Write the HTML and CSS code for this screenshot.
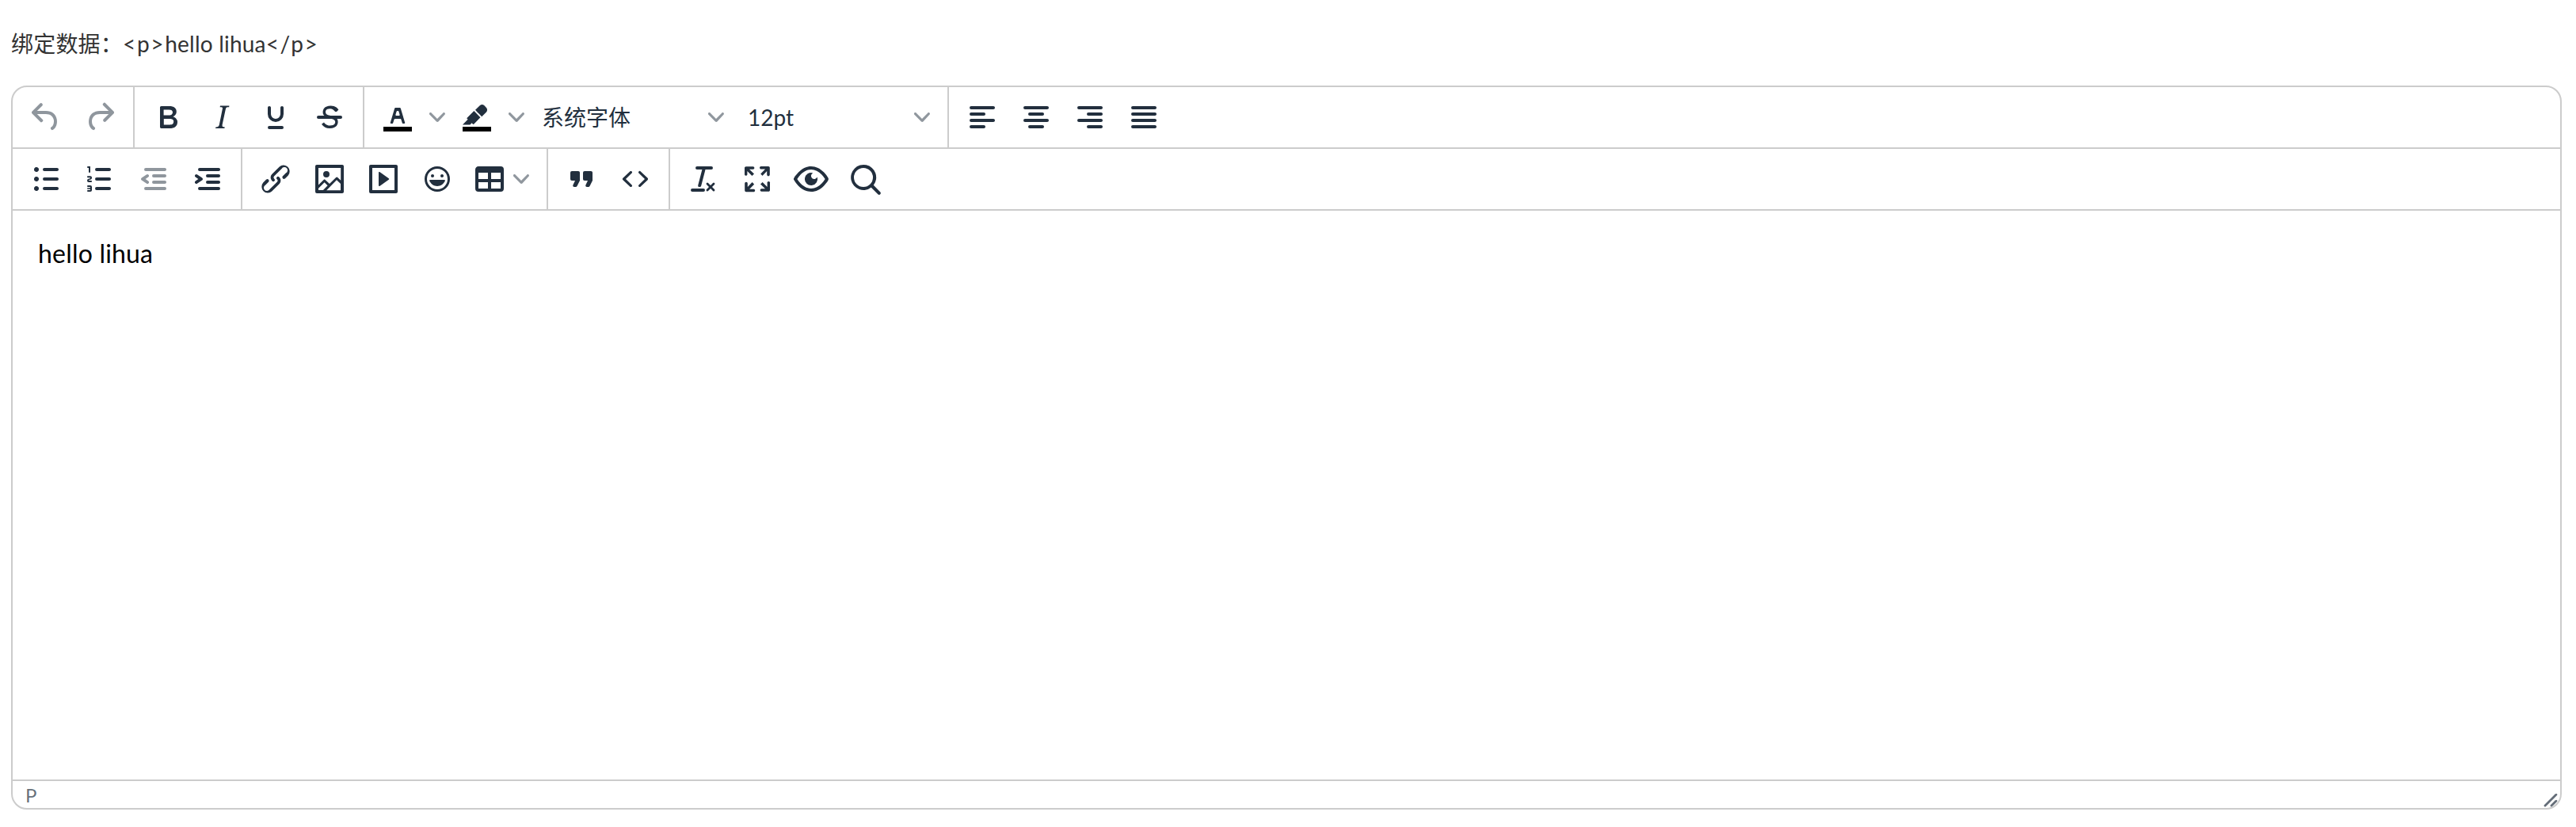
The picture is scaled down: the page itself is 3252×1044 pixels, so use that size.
FILE: index.html
```html
<!DOCTYPE html>
<html lang="zh-CN">
<head>
    <meta charset="UTF-8">
    <title>TinyMCE</title>
    <link rel="stylesheet" href="styles.css">
</head>
<body>
    <p class="bound-data">绑定数据：<span class="tag">&lt;p&gt;</span>hello lihua<span class="tag">&lt;/p&gt;</span></p>

    <div class="editor">
        <div class="toolbar">
            <div class="group">
                <button class="btn disabled"><svg class="icon" viewBox="0 0 24 24"><path d="M6.4 8H12c3.7 0 6.2 2 6.8 5.1.6 2.7-.4 5.6-2.3 6.8a1 1 0 01-1-1.8c1.1-.6 1.8-2.7 1.4-4.6-.5-2.1-2.1-3.5-4.9-3.5H6.4l3.3 3.3a1 1 0 11-1.4 1.4l-5-5a1 1 0 010-1.4l5-5a1 1 0 011.4 1.4L6.4 8z"/></svg></button>
                <button class="btn disabled"><svg class="icon" viewBox="0 0 24 24"><path d="M17.6 10H12c-2.8 0-4.4 1.4-4.9 3.5-.4 2 .3 4 1.4 4.6a1 1 0 11-1 1.8c-2-1.2-2.9-4.1-2.3-6.8.6-3 3-5.1 6.8-5.1h5.6l-3.3-3.3a1 1 0 111.4-1.4l5 5a1 1 0 010 1.4l-5 5a1 1 0 01-1.4-1.4l3.3-3.3z"/></svg></button>
            </div>
            <div class="group">
                <button class="btn"><svg class="icon" viewBox="0 0 24 24"><path d="M7.8 19c-.3 0-.5 0-.6-.2l-.2-.5V5.7c0-.2 0-.4.2-.5l.6-.2h5c1.5 0 2.7.3 3.5 1 .7.6 1.1 1.4 1.1 2.5a3 3 0 01-.6 1.9c-.4.6-1 1-1.6 1.2.4.1.9.3 1.3.6s.8.7 1 1.2c.4.4.5 1 .5 1.6 0 1.3-.4 2.3-1.3 3-.8.7-2.1 1-3.8 1H7.8zm5-8.3c.6 0 1.2-.1 1.6-.5.4-.3.6-.7.6-1.3 0-1.1-.8-1.7-2.3-1.7H9.3v3.5h3.4zm.5 6c.7 0 1.3-.1 1.7-.4.4-.4.6-.9.6-1.5s-.2-1-.7-1.4c-.4-.3-1-.4-2-.4H9.4v3.8h4z" fill-rule="evenodd"/></svg></button>
                <button class="btn"><svg class="icon" viewBox="0 0 24 24"><path d="M16.7 4.7l-.1.9h-.3c-.6 0-1 0-1.4.3-.3.3-.4.6-.5 1.1l-2.1 9.8v.6c0 .5.4.8 1.4.8h.2l-.2.8H8l.2-.8h.2c1.1 0 1.8-.5 2-1.5l2-9.8.1-.5c0-.6-.4-.8-1.4-.8h-.3l.2-.9h5.8z" fill-rule="evenodd"/></svg></button>
                <button class="btn"><svg class="icon" viewBox="0 0 24 24"><path d="M8 5c.6 0 1 .4 1 1v4a3 3 0 006 0V6c0-.6.4-1 1-1s1 .4 1 1v4a5 5 0 01-10 0V6c0-.6.4-1 1-1zM8 17.5h8a1 1 0 010 2H8a1 1 0 010-2z"/></svg></button>
                <button class="btn"><svg class="icon" viewBox="0 0 24 24"><path d="M15.6 8.5c-.5-.7-1-1.1-1.3-1.3-.6-.4-1.3-.6-2-.6-2.7 0-2.8 1.7-2.8 2.1 0 1.6 1.8 2 3.2 2.3 4.4.9 4.6 2.8 4.6 3.9 0 1.4-.7 4.1-5 4.1A6.2 6.2 0 017 16.4l1.5-1.1c.4.6 1.6 2 3.7 2 1.6 0 2.5-.4 3-1 .3-.4.4-.9.4-1.3 0-1.6-1.8-2-3.2-2.3-4.4-.9-4.6-2.8-4.6-3.9 0-1.4.7-4.1 5-4.1 1.4 0 2.6.4 3.5 1 .6.5 1.1 1 1.4 1.6l-1.2 1.2z" fill-rule="nonzero"/><path d="M5 11h14a1 1 0 010 2H5a1 1 0 010-2z"/></svg></button>
            </div>
            <div class="group">
                <button class="btn"><svg class="icon" viewBox="0 0 24 24"><path class="swatch" d="M3 18h18v3H3z"/><path d="M8.7 16h-.8a.5.5 0 01-.5-.6l2.7-9c.1-.3.3-.4.5-.4h2.8c.2 0 .4.1.5.4l2.7 9a.5.5 0 01-.5.6h-.8a.5.5 0 01-.4-.4l-.7-2.2c0-.3-.3-.4-.5-.4h-3.4c-.2 0-.4.1-.5.4l-.7 2.2c0 .3-.2.4-.4.4zm2.6-7.6l-.6 2a.5.5 0 00.5.6h1.6a.5.5 0 00.5-.6l-.6-2c0-.3-.3-.4-.5-.4h-.4c-.2 0-.4.1-.5.4z" fill-rule="evenodd"/></svg></button>
                <button class="split-chevron"><svg class="chevron" viewBox="0 0 10 10"><path d="M8.7 2.2c.3-.3.8-.3 1 0 .4.4.4.9 0 1.2L5.7 7.8c-.3.3-.9.3-1.2 0L.2 3.4a.8.8 0 010-1.2c.3-.3.8-.3 1.1 0L5 6l3.7-3.8z"/></svg></button>
                <button class="btn"><svg class="icon" viewBox="0 0 24 24"><path class="swatch" d="M3 18h18v3H3z"/><path fill-rule="nonzero" d="M7.7 16.7H3l3.3-3.3-.7-.8L10.2 8l4 4.1-4 4.2c-.2.2-.6.2-.8 0l-.6-.7-1.1 1.1zm5-7.5L11 7.4l3-2.9a2 2 0 012.6 0L18 6c.7.7.7 2 0 2.7l-2.9 2.9-1.8-1.8-.5-.6"/></svg></button>
                <button class="split-chevron"><svg class="chevron" viewBox="0 0 10 10"><path d="M8.7 2.2c.3-.3.8-.3 1 0 .4.4.4.9 0 1.2L5.7 7.8c-.3.3-.9.3-1.2 0L.2 3.4a.8.8 0 010-1.2c.3-.3.8-.3 1.1 0L5 6l3.7-3.8z"/></svg></button>
                <button class="select"><span class="select-label">系统字体</span><svg class="chevron" viewBox="0 0 10 10"><path d="M8.7 2.2c.3-.3.8-.3 1 0 .4.4.4.9 0 1.2L5.7 7.8c-.3.3-.9.3-1.2 0L.2 3.4a.8.8 0 010-1.2c.3-.3.8-.3 1.1 0L5 6l3.7-3.8z"/></svg></button>
                <button class="select"><span class="select-label">12pt</span><svg class="chevron" viewBox="0 0 10 10"><path d="M8.7 2.2c.3-.3.8-.3 1 0 .4.4.4.9 0 1.2L5.7 7.8c-.3.3-.9.3-1.2 0L.2 3.4a.8.8 0 010-1.2c.3-.3.8-.3 1.1 0L5 6l3.7-3.8z"/></svg></button>
            </div>
            <div class="group last">
                <button class="btn"><svg class="icon" viewBox="0 0 24 24"><path d="M5 5h14c.6 0 1 .4 1 1s-.4 1-1 1H5a1 1 0 110-2zm0 4h8c.6 0 1 .4 1 1s-.4 1-1 1H5a1 1 0 110-2zm0 8h8c.6 0 1 .4 1 1s-.4 1-1 1H5a1 1 0 010-2zm0-4h14c.6 0 1 .4 1 1s-.4 1-1 1H5a1 1 0 010-2z"/></svg></button>
                <button class="btn"><svg class="icon" viewBox="0 0 24 24"><path d="M5 5h14c.6 0 1 .4 1 1s-.4 1-1 1H5a1 1 0 110-2zm3 4h8c.6 0 1 .4 1 1s-.4 1-1 1H8a1 1 0 110-2zm0 8h8c.6 0 1 .4 1 1s-.4 1-1 1H8a1 1 0 010-2zm-3-4h14c.6 0 1 .4 1 1s-.4 1-1 1H5a1 1 0 010-2z"/></svg></button>
                <button class="btn"><svg class="icon" viewBox="0 0 24 24"><path d="M5 5h14c.6 0 1 .4 1 1s-.4 1-1 1H5a1 1 0 110-2zm6 4h8c.6 0 1 .4 1 1s-.4 1-1 1h-8a1 1 0 010-2zm0 8h8c.6 0 1 .4 1 1s-.4 1-1 1h-8a1 1 0 010-2zm-6-4h14c.6 0 1 .4 1 1s-.4 1-1 1H5a1 1 0 010-2z"/></svg></button>
                <button class="btn"><svg class="icon" viewBox="0 0 24 24"><path d="M5 5h14c.6 0 1 .4 1 1s-.4 1-1 1H5a1 1 0 110-2zm0 4h14c.6 0 1 .4 1 1s-.4 1-1 1H5a1 1 0 110-2zm0 4h14c.6 0 1 .4 1 1s-.4 1-1 1H5a1 1 0 010-2zm0 4h14c.6 0 1 .4 1 1s-.4 1-1 1H5a1 1 0 010-2z"/></svg></button>
            </div>
        </div>

        <div class="toolbar">
            <div class="group">
                <button class="btn"><svg class="icon" viewBox="0 0 24 24"><path d="M11 5h8c.6 0 1 .4 1 1s-.4 1-1 1h-8a1 1 0 010-2zm0 6h8c.6 0 1 .4 1 1s-.4 1-1 1h-8a1 1 0 010-2zm0 6h8c.6 0 1 .4 1 1s-.4 1-1 1h-8a1 1 0 010-2zM4.5 6c0-.4.1-.8.4-1 .3-.4.7-.5 1.1-.5s.8.1 1 .4c.4.3.5.7.5 1.1s-.1.8-.4 1c-.3.4-.7.5-1.1.5s-.8-.1-1-.4c-.4-.3-.5-.7-.5-1.1zm0 6c0-.4.1-.8.4-1 .3-.4.7-.5 1.1-.5s.8.1 1 .4c.4.3.5.7.5 1.1s-.1.8-.4 1c-.3.4-.7.5-1.1.5s-.8-.1-1-.4c-.4-.3-.5-.7-.5-1.1zm0 6c0-.4.1-.8.4-1 .3-.4.7-.5 1.1-.5s.8.1 1 .4c.4.3.5.7.5 1.1s-.1.8-.4 1c-.3.4-.7.5-1.1.5s-.8-.1-1-.4c-.4-.3-.5-.7-.5-1.1z"/></svg></button>
                <button class="btn"><svg class="icon" viewBox="0 0 24 24"><path d="M10 17h8c.6 0 1 .4 1 1s-.4 1-1 1h-8a1 1 0 010-2zm0-6h8c.6 0 1 .4 1 1s-.4 1-1 1h-8a1 1 0 010-2zm0-6h8c.6 0 1 .4 1 1s-.4 1-1 1h-8a1 1 0 010-2z"/><path d="M6 4v3.5c0 .3-.2.5-.5.5a.5.5 0 01-.5-.5V5h-.5a.5.5 0 010-1H6zm-1 8.8l.2.2h1.3c.3 0 .5.2.5.5s-.2.5-.5.5H4.9a1 1 0 01-.9-1V13c0-.4.3-.8.6-1l1.2-.4.2-.3a.2.2 0 00-.2-.2H4.5a.5.5 0 01-.5-.5c0-.3.2-.5.5-.5h1.6c.5 0 .9.4.9 1v.1c0 .4-.3.8-.6 1l-1.2.4-.2.3zM7 17v2c0 .6-.4 1-1 1H4.5a.5.5 0 010-1h1.2c.2 0 .3-.1.3-.3 0-.2-.1-.3-.3-.3H4.4a.4.4 0 110-.8h1.3c.2 0 .3-.1.3-.3 0-.2-.1-.3-.3-.3H4.5a.5.5 0 110-1H6c.6 0 1 .4 1 1z"/></svg></button>
                <button class="btn disabled"><svg class="icon" viewBox="0 0 24 24"><path d="M7 5h12c.6 0 1 .4 1 1s-.4 1-1 1H7a1 1 0 110-2zm5 4h7c.6 0 1 .4 1 1s-.4 1-1 1h-7a1 1 0 010-2zm0 4h7c.6 0 1 .4 1 1s-.4 1-1 1h-7a1 1 0 010-2zm-5 4h12a1 1 0 010 2H7a1 1 0 010-2zm1.6-3.8a1 1 0 01-1.2 1.6l-3-2a1 1 0 010-1.6l3-2a1 1 0 011.2 1.6L6.8 12l1.8 1.2z"/></svg></button>
                <button class="btn"><svg class="icon" viewBox="0 0 24 24"><path d="M7 5h12c.6 0 1 .4 1 1s-.4 1-1 1H7a1 1 0 110-2zm5 4h7c.6 0 1 .4 1 1s-.4 1-1 1h-7a1 1 0 010-2zm0 4h7c.6 0 1 .4 1 1s-.4 1-1 1h-7a1 1 0 010-2zm-5 4h12a1 1 0 010 2H7a1 1 0 010-2zm-2.6-3.8L6.2 12l-1.8-1.2a1 1 0 011.2-1.6l3 2a1 1 0 010 1.6l-3 2a1 1 0 11-1.2-1.6z"/></svg></button>
            </div>
            <div class="group">
                <button class="btn"><svg class="icon" viewBox="0 0 24 24"><path d="M6.2 12.3a1 1 0 011.4 1.4l-2 2a2 2 0 102.6 2.8l4.8-4.8a1 1 0 000-1.4 1 1 0 111.4-1.3 2.9 2.9 0 010 4l-4.8 4.8a3.9 3.9 0 01-5.5-5.5l2-2zm11.6-.6a1 1 0 01-1.4-1.4l2-2a2 2 0 10-2.6-2.8L11 10.3a1 1 0 000 1.4 1 1 0 11-1.4 1.3 2.9 2.9 0 010-4L14.4 4.2a3.9 3.9 0 015.5 5.5l-2 2z"/></svg></button>
                <button class="btn"><svg class="icon" viewBox="0 0 24 24"><path d="M5 15.7l3.3-3.2c.3-.3.7-.3 1 0L12 15l4.1-4c.3-.4.8-.4 1 0l2 1.9V5H5v10.7zM5 18V19h3l2.8-2.9-2-2L5 17.9zm14-3l-2.5-2.4-6.4 6.5H19v-4zM4 3h16c.6 0 1 .4 1 1v16c0 .6-.4 1-1 1H4a1 1 0 01-1-1V4c0-.6.4-1 1-1zm6 8a2 2 0 100-4 2 2 0 000 4z" fill-rule="nonzero"/></svg></button>
                <button class="btn"><svg class="icon" viewBox="0 0 24 24"><path d="M4 3h16c.6 0 1 .4 1 1v16c0 .6-.4 1-1 1H4a1 1 0 01-1-1V4c0-.6.4-1 1-1zm1 2v14h14V5H5zm4.8 2.6l5.6 4a.5.5 0 010 .8l-5.6 4A.5.5 0 019 16V8a.5.5 0 01.8-.4z" fill-rule="nonzero"/></svg></button>
                <button class="btn"><svg class="icon" viewBox="0 0 24 24"><path d="M9 11c.6 0 1-.4 1-1s-.4-1-1-1a1 1 0 00-1 1c0 .6.4 1 1 1zm6 0c.6 0 1-.4 1-1s-.4-1-1-1a1 1 0 00-1 1c0 .6.4 1 1 1zm-3 5.5c2.1 0 4-1.3 4.9-3.2.1-.3 0-.8-.4-.8H7.5c-.4 0-.5.5-.4.8.9 1.9 2.8 3.2 4.9 3.2zm0-12.5a8 8 0 100 16 8 8 0 000-16zm0 14.5a6.5 6.5 0 110-13 6.5 6.5 0 010 13z" fill-rule="evenodd"/></svg></button>
                <button class="menu-btn"><svg class="icon" viewBox="0 0 24 24"><path d="M19 4a2 2 0 012 2v12a2 2 0 01-2 2H5a2 2 0 01-2-2V6c0-1.1.9-2 2-2h14zM5 14v4h6v-4H5zm14 0h-6v4h6v-4zm0-6h-6v4h6V8zM5 12h6V8H5v4z" fill-rule="nonzero"/></svg><svg class="chevron" viewBox="0 0 10 10"><path d="M8.7 2.2c.3-.3.8-.3 1 0 .4.4.4.9 0 1.2L5.7 7.8c-.3.3-.9.3-1.2 0L.2 3.4a.8.8 0 010-1.2c.3-.3.8-.3 1.1 0L5 6l3.7-3.8z"/></svg></button>
            </div>
            <div class="group">
                <button class="btn"><svg class="icon" viewBox="0 0 24 24"><path d="M7.5 17h.9c.4 0 .7-.2.9-.6L11 13V8c0-.6-.4-1-1-1H6a1 1 0 00-1 1v4c0 .6.4 1 1 1h2l-1.3 2.7a1 1 0 00.8 1.3zm8 0h.9c.4 0 .7-.2.9-.6L19 13V8c0-.6-.4-1-1-1h-4a1 1 0 00-1 1v4c0 .6.4 1 1 1h2l-1.3 2.7a1 1 0 00.8 1.3z" fill-rule="nonzero"/></svg></button>
                <button class="btn"><svg class="icon" viewBox="0 0 24 24"><path d="M9.8 15.7c.3.3.3.8 0 1-.3.4-.9.4-1.2 0l-4.4-4.1a.8.8 0 010-1.2l4.4-4.2c.3-.3.9-.3 1.2 0 .3.3.3.8 0 1.1L6 12l3.8 3.7zM14.2 15.7c-.3.3-.3.8 0 1 .4.4.9.4 1.2 0l4.4-4.1c.3-.3.3-.9 0-1.2l-4.4-4.2a.8.8 0 00-1.2 0c-.3.3-.3.8 0 1.1L18 12l-3.8 3.7z" fill-rule="nonzero"/></svg></button>
            </div>
            <div class="group last">
                <button class="btn"><svg class="icon" viewBox="0 0 24 24"><path d="M13.2 6a1 1 0 010 .2l-2.6 10a1 1 0 01-1 .8h-.2a.8.8 0 01-.8-1l2.6-10H8a1 1 0 110-2h9a1 1 0 010 2h-3.8zM5 18h7a1 1 0 010 2H5a1 1 0 010-2zm13 1.5L16.5 18 15 19.5a.7.7 0 01-1-1l1.5-1.5-1.5-1.5a.7.7 0 011-1l1.5 1.5 1.5-1.5a.7.7 0 011 1L17.5 17l1.5 1.5a.7.7 0 01-1 1z" fill-rule="evenodd"/></svg></button>
                <button class="btn"><svg class="icon" viewBox="0 0 24 24"><path d="M15.3 10l-1.2-1.3 2.9-3h-2.3a.9.9 0 110-1.7H19c.5 0 .9.4.9.9v4.4a.9.9 0 11-1.8 0V7l-2.9 3zm0 4l3 3v-2.3a.9.9 0 111.7 0V19c0 .5-.4.9-.9.9h-4.4a.9.9 0 110-1.8H17l-3-2.9 1.3-1.2zM10 15.4l-2.9 3h2.3a.9.9 0 110 1.7H5a.9.9 0 01-.9-.9v-4.4a.9.9 0 111.8 0V17l2.9-3 1.2 1.3zM8.7 10L5.7 7v2.3a.9.9 0 01-1.7 0V5c0-.5.4-.9.9-.9h4.4a.9.9 0 010 1.8H7l3 2.9-1.3 1.2z" fill-rule="nonzero"/></svg></button>
                <button class="btn"><svg class="icon" viewBox="0 0 24 24"><path d="M3.5 12.5c.5.8 1.1 1.6 1.8 2.3 2 2 4.2 3.2 6.7 3.2s4.7-1.2 6.7-3.2a16.2 16.2 0 002.1-2.8 15.7 15.7 0 00-2.1-2.8c-2-2-4.2-3.2-6.7-3.2S7.3 7.2 5.3 9.2A16.2 16.2 0 003.2 12l.3.5zm-2.4-1l.7-1.2L4 7.8C6.2 5.4 8.9 4 12 4c3 0 5.8 1.4 8.1 3.8a18.2 18.2 0 012.8 3.7v1l-.7 1.2-2.1 2.5c-2.3 2.4-5 3.8-8.1 3.8-3 0-5.8-1.4-8.1-3.8a18.2 18.2 0 01-2.8-3.7 1 1 0 010-1zm12-3.3a2 2 0 102.7 2.6 4 4 0 11-2.6-2.6z" fill-rule="nonzero"/></svg></button>
                <button class="btn"><svg class="icon" viewBox="0 0 24 24"><path d="M16 17.3a8 8 0 111.4-1.4l4.3 4.4a1 1 0 01-1.4 1.4l-4.4-4.3zm-5-.3a6 6 0 100-12 6 6 0 000 12z" fill-rule="nonzero"/></svg></button>
            </div>
        </div>

        <div class="content">
            <p>hello lihua</p>
        </div>

        <div class="statusbar">
            <span class="path">P</span>
            <svg class="resize" viewBox="0 0 10 10"><path d="M8.1 1.1A.5.5 0 119 2l-7 7A.5.5 0 111 8l7-7zM8.1 5.1A.5.5 0 119 6l-3 3A.5.5 0 115 8l3-3z" fill-rule="nonzero"/></svg>
        </div>
    </div>
</body>
</html>
```

FILE: styles.css
```css
body {
    margin: 0;
    padding: 0 18px 0 14px;
    font-family: Lato, "Noto Sans CJK SC", sans-serif;
    background-color: #fff;
}
.bound-data {
    margin: 0;
    padding-top: 34px;
    height: 74px;
    line-height: 42px;
    font-size: 28px;
    letter-spacing: 0.2px;
    color: #333;
}
.tag {
    letter-spacing: 1.7px;
}
.editor {
    box-sizing: border-box;
    display: flex;
    flex-direction: column;
    height: 914px;
    border: 2px solid #ccc;
    border-radius: 20px;
    overflow: hidden;
    background: #fff;
}
.toolbar {
    display: flex;
    height: 76px;
    border-bottom: 2px solid #ccc;
}
.group {
    display: flex;
    align-items: flex-start;
    padding: 4px 8px 0;
    border-right: 2px solid #ccc;
}
.group.last {
    border-right: none;
}
button {
    display: flex;
    align-items: center;
    padding: 0;
    height: 68px;
    border: none;
    background: none;
    color: #222f3e;
    font-family: inherit;
}
.btn {
    justify-content: center;
    width: 68px;
}
.btn.disabled {
    opacity: 0.5;
}
.icon {
    width: 48px;
    height: 48px;
    fill: #222f3e;
}
.swatch {
    fill: #000;
}
.chevron {
    width: 20px;
    height: 20px;
    margin: 0 6px;
    fill: rgba(34, 47, 62, 0.5);
    flex-shrink: 0;
}
.split-chevron {
    justify-content: center;
    width: 32px;
}
.menu-btn {
    width: 96px;
    padding: 0 8px;
}
.select {
    justify-content: space-between;
    width: 260px;
    padding: 0 8px;
}
.select-label {
    margin-left: 8px;
    font-size: 28px;
    line-height: 48px;
    color: #222f3e;
}
.content {
    flex: 1;
}
.content p {
    margin: 32px;
    font-size: 32px;
    line-height: 1.4;
    letter-spacing: 0.2px;
    color: #000;
}
.statusbar {
    display: flex;
    justify-content: space-between;
    align-items: center;
    flex-shrink: 0;
    height: 34px;
    padding: 0 2px 0 16px;
    border-top: 2px solid #ccc;
}
.path {
    font-size: 24px;
    color: rgba(34, 47, 62, 0.7);
}
.resize {
    align-self: flex-end;
    width: 20px;
    height: 20px;
    fill: rgba(34, 47, 62, 0.7);
}
```
